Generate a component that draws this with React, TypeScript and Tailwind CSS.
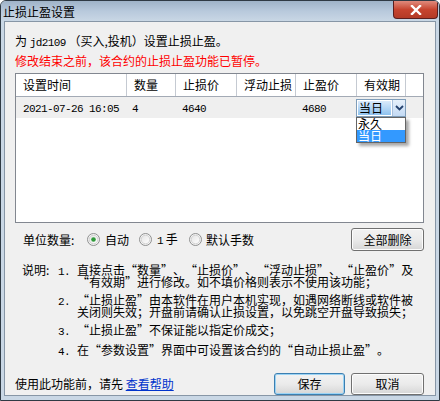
import React from "react";

const M = ({ children }: { children: React.ReactNode }) => (
  <span className="font-['Liberation_Mono',monospace] text-[11px] tracking-[-0.6px]">
    {children}
  </span>
);

// full-width curly quotes, as the dialog font draws them
const L = () => <span className="inline-block w-[12px] text-right">“</span>;
const R = () => <span className="inline-block w-[12px] text-left">”</span>;

function Radio({ checked }: { checked?: boolean }) {
  return (
    <svg width="13" height="13" viewBox="0 0 13 13" className="shrink-0">
      <defs>
        <linearGradient id={checked ? "rg1" : "rg0"} x1="0" y1="0" x2="1" y2="1">
          <stop offset="0" stopColor="#e4e4e4" />
          <stop offset="1" stopColor="#ffffff" />
        </linearGradient>
      </defs>
      <circle cx="6.5" cy="6.5" r="6" fill="#f4f4f4" stroke="#8e8f8f" />
      <circle cx="6.5" cy="6.5" r="4.3" fill={`url(#${checked ? "rg1" : "rg0"})`} stroke="#c9c9c9" strokeWidth="0.8" />
      {checked && <circle cx="6.5" cy="6.5" r="2.3" fill="#2f9a3a" />}
    </svg>
  );
}

function Button({ label, primary, w }: { label: string; primary?: boolean; w: string }) {
  return (
    <div
      className={`${w} h-full flex items-center justify-center rounded-[3px] border ${
        primary ? "border-[#3c7fb1] shadow-[inset_0_0_0_1px_#9bd3f4]" : "border-[#707070] shadow-[inset_0_0_0_1px_#fcfcfc]"
      } bg-linear-to-b from-[#f2f2f2] via-[#ebebeb] to-[#d6d6d6] text-[12px] text-black`}
    >
      {label}
    </div>
  );
}

const cols = [
  { w: "w-[111px]", h: "设置时间" },
  { w: "w-[49px]", h: "数量" },
  { w: "w-[61px]", h: "止损价" },
  { w: "w-[59px]", h: "浮动止损" },
  { w: "w-[61px]", h: "止盈价" },
  { w: "w-[49px]", h: "有效期" },
];

export default function App() {
  return (
    <div className="w-[440px] h-[401px] flex flex-col bg-[#c9d7e5] border border-[#2f3a44] rounded-t-[6px] overflow-hidden font-['Noto_Sans_CJK_SC',sans-serif] text-[12px] text-black">
      {/* title bar */}
      <div className="h-[23px] flex items-start justify-between bg-linear-to-b from-[#9fb3c8] via-[#b8c9dc] to-[#c9d7e5]">
        <div className="pl-[2px] pt-[3px] leading-[16px] text-[12px]">止损止盈设置</div>
        <div className="mr-[1px] w-[45px] h-[18px] rounded-b-[4px] border border-t-0 border-[#5a1e1e] bg-linear-to-b from-[#e08a7c] via-[#c7442f] to-[#b33a26] flex items-center justify-center">
          <svg width="12" height="10" viewBox="0 0 12 10">
            <path d="M2 1 L10 9 M10 1 L2 9" stroke="#ffffff" strokeWidth="2.4" strokeLinecap="square" />
          </svg>
        </div>
      </div>

      {/* content panel */}
      <div className="mx-[3px] mb-[4px] flex-1 bg-[#f0f0f0] border border-[#8796a6] pl-[10px] pr-[11px]">
        <div className="pt-[10px] leading-[17px] whitespace-nowrap">
          为 <M>jd2109</M> （买入,投机）设置止损止盈。
        </div>
        <div className="leading-[17px] whitespace-nowrap text-[#ff0000]">
          修改结束之前，该合约的止损止盈功能已暂停。
        </div>

        {/* table */}
        <div className="mt-[4px] h-[150px] border border-[#828790] bg-white">
          <div className="flex h-[23px] border-b border-[#a3aab5]">
            {cols.map((c) => (
              <div key={c.h} className={`${c.w} border-r border-[#c5cad2] pl-[7px] flex items-center`}>
                {c.h}
              </div>
            ))}
          </div>
          <div className="flex h-[21px] bg-[#efefef] items-center">
            <div className="w-[111px] pl-[7px]">
              <M>2021-07-26 16:05</M>
            </div>
            <div className="w-[49px] pl-[5px]">
              <M>4</M>
            </div>
            <div className="w-[61px] pl-[6px]">
              <M>4640</M>
            </div>
            <div className="w-[59px]" />
            <div className="w-[61px] pl-[6px]">
              <M>4680</M>
            </div>
            <div className="relative w-[50px] h-[18px] ml-[-1px] border border-[#7f9db9] bg-white flex">
              <div className="flex-1 m-[1px] bg-linear-to-b from-[#dbeafb] to-[#8ec2ef] leading-[14px] pl-[1px]">
                当日
              </div>
              <div className="w-[13px] bg-linear-to-b from-[#e6f0fb] to-[#c3daf4] border-l border-[#a8c0dd] flex items-center justify-center">
                <svg width="9" height="6" viewBox="0 0 9 6">
                  <path d="M1 1 L4.5 4.5 L8 1" stroke="#24416e" strokeWidth="1.8" fill="none" />
                </svg>
              </div>
              {/* dropdown list */}
              <div className="absolute left-[-1px] top-[17px] w-[50px] border border-[#646464] bg-white shadow-[3px_3px_3px_rgba(0,0,0,0.35)] z-10">
                <div className="h-[12px] leading-[12px] pl-[1px]">永久</div>
                <div className="h-[12px] leading-[12px] pl-[1px] bg-[#3399ff] text-white">当日</div>
              </div>
            </div>
          </div>
        </div>

        {/* unit row */}
        <div className="mt-[5px] h-[23px] flex items-center">
          <div className="pl-[8px] w-[72px]">单位数量:</div>
          <Radio checked />
          <span className="ml-[5px] w-[34px]">自动</span>
          <Radio />
          <span className="ml-[5px] w-[32px]">
            <M>1</M> 手
          </span>
          <Radio />
          <span className="ml-[4px]">默认手数</span>
          <div className="ml-auto h-[23px] flex">
            <Button label="全部删除" w="w-[73px]" />
          </div>
        </div>

        {/* notes */}
        <div className="mt-[13px] leading-[12px] whitespace-nowrap">
          <div className="flex">
            <div className="w-[43px] pl-[7px]">说明:</div>
            <div className="w-[19px]">
              <M>1.</M>
            </div>
            <div>
              <div>
                直接点击<L />数量<R />、<L />止损价<R />、<L />浮动止损<R />、<L />止盈价<R />及
              </div>
              <div>
                <L />有效期<R />进行修改。如不填价格则表示不使用该功能；
              </div>
            </div>
          </div>
          <div className="flex mt-[6px]">
            <div className="w-[43px]" />
            <div className="w-[19px]">
              <M>2.</M>
            </div>
            <div>
              <div>
                <L />止损止盈<R />由本软件在用户本机实现，如遇网络断线或软件被
              </div>
              <div>关闭则失效；开盘前请确认止损设置，以免跳空开盘导致损失；</div>
            </div>
          </div>
          <div className="flex mt-[6px]">
            <div className="w-[43px]" />
            <div className="w-[19px]">
              <M>3.</M>
            </div>
            <div>
              <L />止损止盈<R />不保证能以指定价成交；
            </div>
          </div>
          <div className="flex mt-[6px]">
            <div className="w-[43px]" />
            <div className="w-[19px]">
              <M>4.</M>
            </div>
            <div>
              在<L />参数设置<R />界面中可设置该合约的<L />自动止损止盈<R />。
            </div>
          </div>
        </div>

        {/* bottom */}
        <div className="mt-[15px] h-[22px] flex items-center">
          <div className="whitespace-nowrap">
            使用此功能前，请先 <span className="text-[#0033cc] underline">查看帮助</span>
          </div>
          <div className="ml-auto h-[22px] flex gap-[6px]">
            <Button label="保存" primary w="w-[71px]" />
            <Button label="取消" w="w-[73px]" />
          </div>
        </div>
      </div>
    </div>
  );
}
